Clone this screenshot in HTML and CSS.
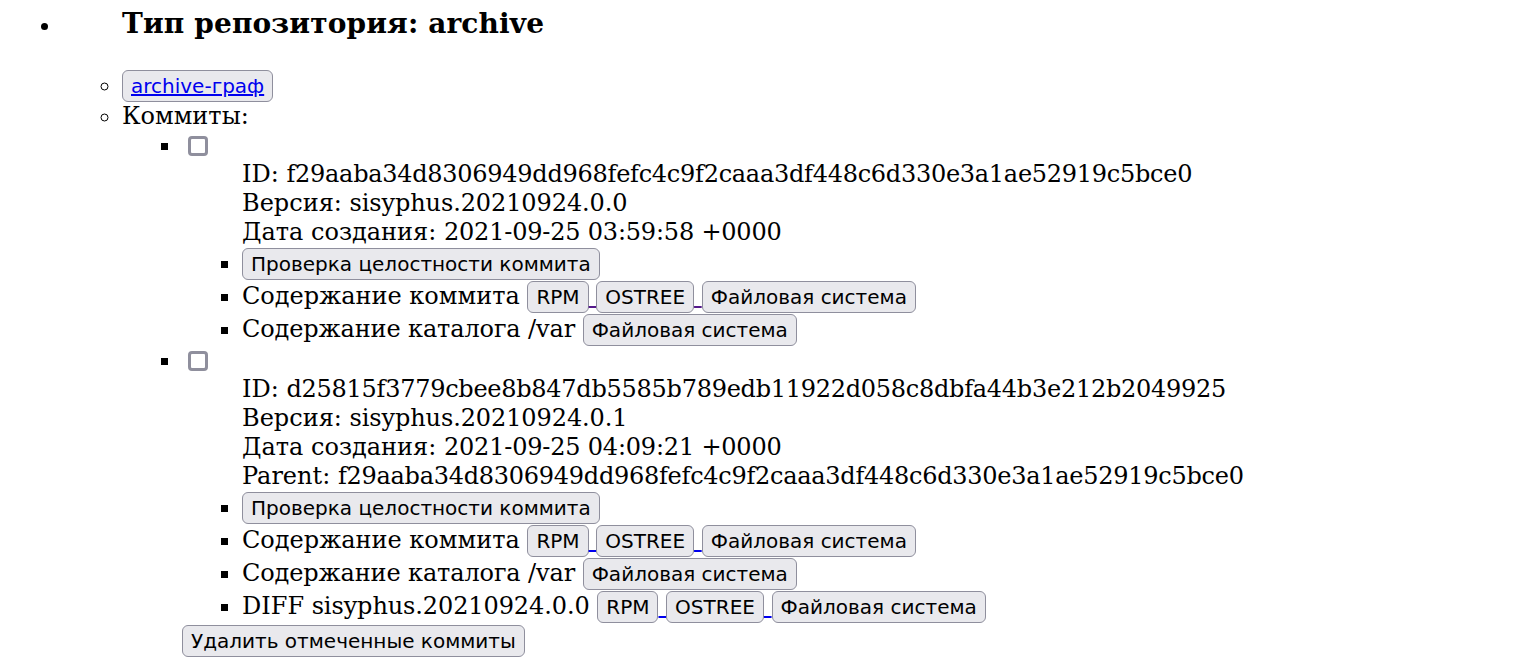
FILE: index.html
```html
<!DOCTYPE html>
<html lang="ru">
<head>
<meta charset="utf-8">
<title>Репозиторий</title>
<link rel="stylesheet" href="styles.css">
</head>
<body>
<ul class="l1">
  <li class="repo">
    <h3 class="repo-title">Тип репозитория: archive</h3>
    <ul class="l2">
      <li><button class="btn"><a class="link" href="#">archive-граф</a></button></li>
      <li>Коммиты:
        <ul class="l3">
          <li><input class="check" type="checkbox">
            <ul class="l4">
              <li class="info">ID: <span class="hash">f29aaba34d8306949dd968fefc4c9f2caaa3df448c6d330e3a1ae52919c5bce0</span><br>Версия: <span class="ver">sisyphus.20210924.0.0</span><br>Дата создания: <span class="val">2021-09-25 03:59:58 +0000</span></li>
              <li><button class="btn">Проверка целостности коммита</button></li>
              <li>Содержание коммита <a class="glink visited" href="#"><button class="btn">RPM</button> </a><a class="glink visited" href="#"><button class="btn">OSTREE</button> </a><a class="glink visited" href="#"><button class="btn">Файловая система</button></a></li>
              <li><span class="var-label">Содержание каталога /var</span> <a class="glink visited" href="#"><button class="btn">Файловая система</button></a></li>
            </ul>
          </li>
          <li><input class="check" type="checkbox">
            <ul class="l4">
              <li class="info">ID: <span class="hash">d25815f3779cbee8b847db5585b789edb11922d058c8dbfa44b3e212b2049925</span><br>Версия: <span class="ver">sisyphus.20210924.0.1</span><br>Дата создания: <span class="val">2021-09-25 04:09:21 +0000</span><br>Parent: <span class="hash">f29aaba34d8306949dd968fefc4c9f2caaa3df448c6d330e3a1ae52919c5bce0</span></li>
              <li><button class="btn">Проверка целостности коммита</button></li>
              <li>Содержание коммита <a class="glink" href="#"><button class="btn">RPM</button> </a><a class="glink" href="#"><button class="btn">OSTREE</button> </a><a class="glink" href="#"><button class="btn">Файловая система</button></a></li>
              <li><span class="var-label">Содержание каталога /var</span> <a class="glink" href="#"><button class="btn">Файловая система</button></a></li>
              <li>DIFF <span class="ver">sisyphus.20210924.0.0</span> <a class="glink" href="#"><button class="btn">RPM</button> </a><a class="glink" href="#"><button class="btn">OSTREE</button> </a><a class="glink" href="#"><button class="btn">Файловая система</button></a></li>
            </ul>
          </li>
          <li class="plain"><button class="btn">Удалить отмеченные коммиты</button></li>
        </ul>
      </li>
    </ul>
  </li>
</ul>
</body>
</html>
```
FILE: styles.css
```css
html, body {
  background: #ffffff;
}
body {
  margin: 0;
  color: #000000;
  font-family: "DejaVu Serif", serif;
  font-size: 24px;
  line-height: 29px;
}
ul {
  margin: 0;
  padding-left: 60px;
}
.l1 {
  padding-left: 62px;
  list-style-type: disc;
}
.l2 {
  list-style-type: circle;
}
.l3, .l4 {
  list-style-type: square;
}
.repo-title {
  margin: 7px 0 29px 60px;
  font-size: 28px;
  line-height: 33px;
  font-weight: bold;
  letter-spacing: 0.12px;
}
.info, .plain {
  list-style: none;
}
.hash {
  letter-spacing: -0.27px;
}
.val {
  letter-spacing: -0.2px;
}
.ver {
  letter-spacing: -0.1px;
}
.var-label {
  letter-spacing: -0.12px;
}
.plain {
  padding-top: 1px;
}
.btn {
  display: inline-block;
  margin: 1px 0 0 0;
  padding: 3px 8px;
  border: 1px solid #8f8f9d;
  border-radius: 6px;
  background: #e9e9ed;
  color: #000000;
  font-family: "DejaVu Sans", sans-serif;
  font-size: 20px;
  line-height: 24px;
}
.link {
  color: #0000ee;
  text-decoration: underline;
}
.glink {
  color: #0000ee;
  text-decoration: underline;
}
.glink.visited {
  color: #551a8b;
}
.check {
  -webkit-appearance: none;
  appearance: none;
  display: inline-block;
  vertical-align: top;
  box-sizing: border-box;
  width: 20px;
  height: 20px;
  margin: 5px 0 0 6px;
  border: 3px solid #8f8f9d;
  border-radius: 4px;
  background: #ffffff;
}
```
